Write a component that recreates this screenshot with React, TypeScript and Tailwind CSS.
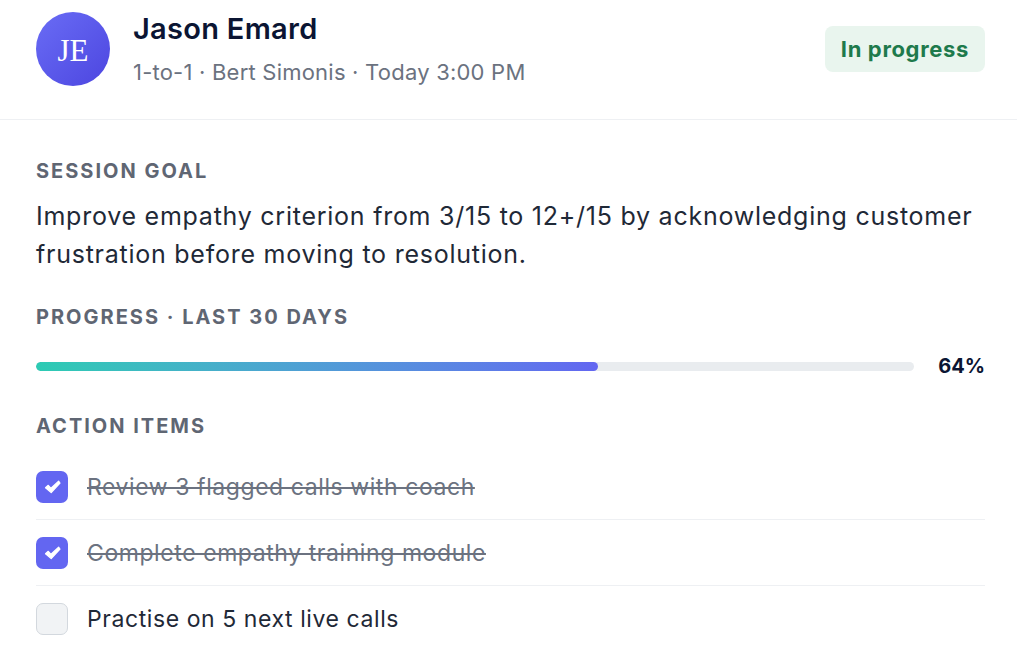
import React from 'react';

const items = [
  { label: 'Review 3 flagged calls with coach', done: true },
  { label: 'Complete empathy training module', done: true },
  { label: 'Practise on 5 next live calls', done: false },
];

export default function App() {
  const progress = 64;

  return (
    <div className="min-h-screen w-full bg-white font-['Inter',sans-serif]">
      {/* Header */}
      <div className="flex items-center justify-between pl-[36px] pr-[32px] pt-[12px] pb-[33px] border-b border-[#eef0f3]">
        <div className="flex items-center gap-[23px]">
          <div className="w-[74px] h-[74px] rounded-full bg-gradient-to-br from-[#6a6cf5] to-[#4d45e0] flex items-center justify-center">
            <span className="text-white text-[31px] font-['Liberation_Serif',serif] leading-none pt-[2px]">JE</span>
          </div>
          <div className="flex flex-col">
            <span className="text-[29px] leading-[34px] font-semibold text-[#0b1533] tracking-[0.01em]">Jason Emard</span>
            <span className="mt-[12px] text-[22px] leading-[28px] tracking-[0.01em] text-[#6b7280]">1-to-1 · Bert Simonis · Today 3:00 PM</span>
          </div>
        </div>
        <div className="h-[46px] px-[16px] rounded-[8px] bg-[#e9f5ee] flex items-center">
          <span className="text-[22px] font-bold tracking-[0.03em] text-[#1e7a4c]">In progress</span>
        </div>
      </div>

      {/* Body */}
      <div className="pl-[36px] pr-[32px] pt-[39px]">
        <div className="text-[20px] leading-[24px] font-bold tracking-[0.1em] text-[#5f6673]">SESSION GOAL</div>
        <p className="mt-[14px] text-[25px] leading-[38px] tracking-[0.03em] text-[#1f2937]">
          Improve empathy criterion from 3/15 to 12+/15 by acknowledging customer frustration before moving to resolution.
        </p>

        <div className="mt-[32px] text-[20px] leading-[24px] font-bold tracking-[0.1em] text-[#5f6673]">PROGRESS · LAST 30 DAYS</div>
        <div className="mt-[25px] flex items-center gap-[24px]">
          <div className="flex-1 h-[9px] rounded-full bg-[#e9ecef] overflow-hidden">
            <div
              className="h-full rounded-full bg-gradient-to-r from-[#2ccbb3] to-[#6366f1]"
              style={{ width: `${progress}%` }}
            />
          </div>
          <span className="text-[20px] leading-[24px] font-bold text-[#0b1533]">{progress}%</span>
        </div>

        <div className="mt-[36px] text-[20px] leading-[24px] font-bold tracking-[0.1em] text-[#5f6673]">ACTION ITEMS</div>
        <div className="mt-[16px] flex flex-col">
          {items.map((item, i) => (
            <div
              key={item.label}
              className={`h-[66px] flex items-center gap-[19px] ${i < items.length - 1 ? 'border-b border-[#eef0f3]' : ''}`}
            >
              {item.done ? (
                <div className="w-[32px] h-[32px] rounded-[7px] bg-[#6366f1] flex items-center justify-center">
                  <svg width="17" height="14" viewBox="0 0 17 14">
                    <path
                      d="M1.5 7.8 L4.3 5.3 L7 8.3 L14.6 1.2 L16 3 L7.2 12.6 Z"
                      fill="white"
                      stroke="white"
                      strokeWidth="1.2"
                      strokeLinejoin="round"
                    />
                  </svg>
                </div>
              ) : (
                <div className="w-[32px] h-[32px] rounded-[7px] bg-[#f1f3f5] border border-[#d3d8de]" />
              )}
              <span
                className={`text-[23px] leading-[30px] tracking-[0.025em] ${item.done ? 'line-through text-[#6b7280]' : 'text-[#1f2937]'}`}
              >
                {item.label}
              </span>
            </div>
          ))}
        </div>
      </div>
    </div>
  );
}
